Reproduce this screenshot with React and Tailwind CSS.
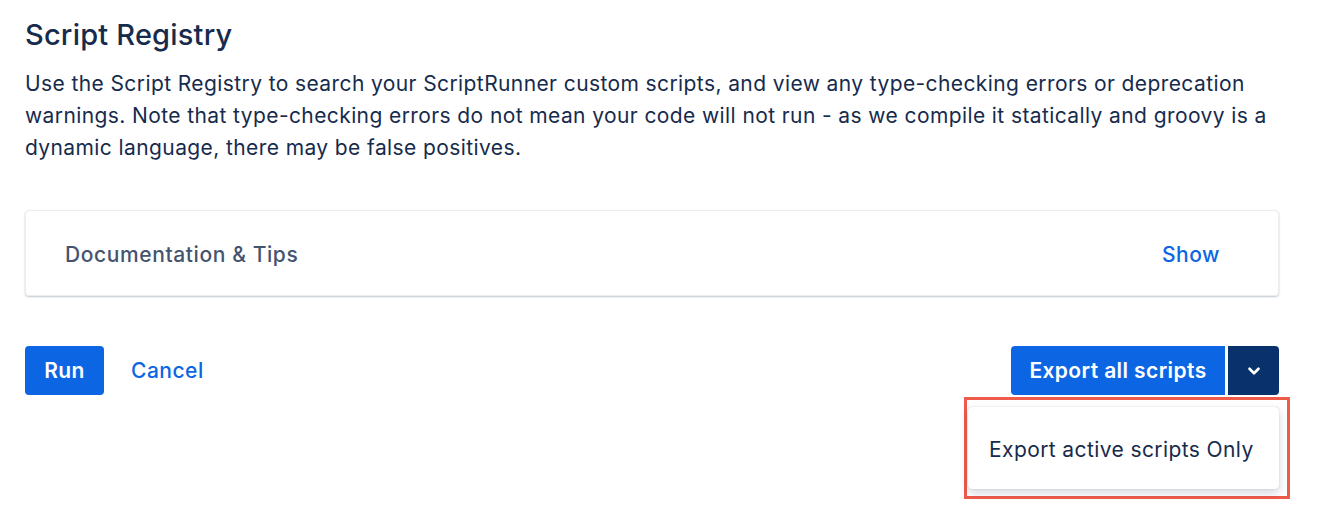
import { ChevronDown } from "lucide-react";

const App = () => {
  return (
    <div
      className="w-[1324px] h-[516px] bg-white text-[#172B4D] pl-[25px] pr-[45px] pt-[18px]"
      style={{ fontFamily: "Inter, 'Noto Sans', sans-serif" }}
    >
      <h1 className="text-[29px] leading-[34px] font-medium tracking-[0.2px]">Script Registry</h1>
      <p className="mt-[16px] w-[1250px] text-[21px] leading-[32px] tracking-[0.4px]">
        Use the Script Registry to search your ScriptRunner custom scripts, and view any type-checking errors or
        deprecation warnings. Note that type-checking errors do not mean your code will not run - as we compile it
        statically and groovy is a dynamic language, there may be false positives.
      </p>

      {/* Documentation card */}
      <div className="mt-[46px] h-[86px] rounded-[4px] border border-[#EBECF0] shadow-[0_1px_2px_rgba(9,30,66,0.25)] flex items-center justify-between pl-[39px] pr-[58px] pt-[3px]">
        <span className="text-[21px] font-medium tracking-[0.6px] text-[#44546F]">Documentation &amp; Tips</span>
        <button className="text-[21px] font-medium tracking-[0.5px] text-[#0C66E4]">Show</button>
      </div>

      {/* Actions */}
      <div className="mt-[50px] flex items-center justify-between">
        <div className="flex items-center gap-[27px]">
          <button className="h-[49px] w-[79px] rounded-[4px] bg-[#0C66E4] text-white text-[21px] font-semibold tracking-[0.4px]">
            Run
          </button>
          <button className="text-[21px] font-medium tracking-[0.5px] text-[#0C66E4]">Cancel</button>
        </div>
        <div className="relative flex items-center gap-[3px]">
          <button className="h-[49px] w-[214px] rounded-l-[4px] bg-[#0C66E4] text-white text-[21px] font-semibold tracking-[0.4px]">
            Export all scripts
          </button>
          <button className="h-[49px] w-[51px] rounded-r-[4px] bg-[#09326C] text-white flex items-center justify-center">
            <ChevronDown size={18} strokeWidth={3.5} />
          </button>

          {/* Dropdown menu, highlighted */}
          <div className="absolute right-[-11px] top-[51px] w-[326px] h-[102px] border-[3px] border-[#EF5B4B] p-[7px] pl-[1px] pr-[8px]">
            <div className="h-full rounded-[4px] bg-white shadow-[0_4px_10px_rgba(9,30,66,0.18),0_0_1px_rgba(9,30,66,0.3)] flex items-center pl-[21px] pt-[4px]">
              <span className="text-[21px] tracking-[0.4px] text-[#172B4D]">Export active scripts Only</span>
            </div>
          </div>
        </div>
      </div>
    </div>
  );
};

export default App;
